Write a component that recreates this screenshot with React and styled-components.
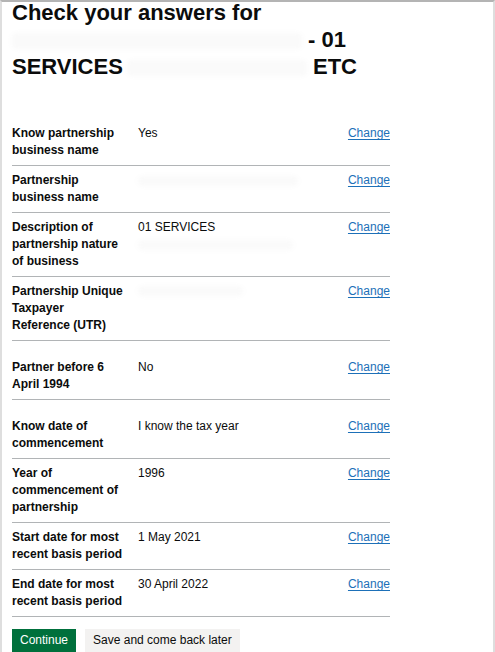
import React from 'react';
import styled, { createGlobalStyle } from 'styled-components';

const GlobalStyle = createGlobalStyle`
  body {
    margin: 0;
    font-family: "Liberation Sans", Arial, sans-serif;
    color: #0b0c0c;
    background: #fff;
  }
`

const Frame = styled.div`
  box-sizing: border-box;
  min-height: 652px;
  border-top: 2px solid #b4b4b4;
  border-left: 2px solid #dedede;
  border-right: 2px solid #dedede;
  padding: 0 10px;
  overflow: hidden;
`

const Heading = styled.h1`
  margin: -3px 0 0;
  font-size: 22px;
  line-height: 27px;
  font-weight: 700;
`

const HeadLine = styled.span`
  display: block;
  white-space: nowrap;
`

// blurred-out personal data in the screenshot
const Redacted = styled.span`
  display: inline-block;
  vertical-align: middle;
  width: ${p => p.$w}px;
  height: ${p => p.$h || 10}px;
  margin-left: ${p => p.$ml || 0}px;
  margin-top: ${p => p.$mt || 0}px;
  background: #fafafa;
  border-radius: 4px;
  filter: blur(2px);
`

const SummaryList = styled.dl`
  margin: 39px 0 0;
  width: 378px;
`

const Row = styled.div`
  display: grid;
  grid-template-columns: 126px 1fr auto;
  padding: ${p => (p.$spaced ? '18px' : '6px')} 0 6px;
  border-bottom: 1px solid #b1b4b6;
  font-size: 12px;
  line-height: 17px;
`

const Key = styled.dt`
  margin: 0;
  font-weight: 700;
`

const Value = styled.dd`
  margin: 0;
  display: flex;
  flex-direction: column;
  align-items: flex-start;
`

const Actions = styled.dd`
  margin: 0;
  text-align: right;
`

const ChangeLink = styled.a`
  color: #1d70b8;
  text-decoration: underline;
  text-underline-offset: 2px;
  cursor: pointer;
`

const ButtonGroup = styled.div`
  display: flex;
  gap: 9px;
  margin-top: 12px;
`

const Button = styled.button`
  font-family: inherit;
  font-size: 12px;
  line-height: 17px;
  padding: 3px 8px 6px;
  border: 0;
  border-radius: 0;
  color: ${p => (p.$secondary ? '#0b0c0c' : '#fff')};
  background: ${p => (p.$secondary ? '#f3f2f1' : '#00703c')};
  box-shadow: 0 2px 0 ${p => (p.$secondary ? '#929191' : '#002d18')};
  cursor: pointer;
`

const rows = [
  { key: ['Know partnership', 'business name'], value: 'Yes' },
  { key: ['Partnership', 'business name'], smudge: { w: 160, mt: 4 } },
  { key: ['Description of', 'partnership nature', 'of business'], value: '01 SERVICES', smudge: { w: 155, mt: 4 } },
  { key: ['Partnership Unique', 'Taxpayer', 'Reference (UTR)'], smudge: { w: 105, mt: 3 } },
  { key: ['Partner before 6', 'April 1994'], value: 'No', spaced: true },
  { key: ['Know date of', 'commencement'], value: 'I know the tax year', spaced: true },
  { key: ['Year of', 'commencement of', 'partnership'], value: '1996' },
  { key: ['Start date for most', 'recent basis period'], value: '1 May 2021' },
  { key: ['End date for most', 'recent basis period'], value: '30 April 2022' },
]

export default function App() {
  return (
    <>
      <GlobalStyle />
      <Frame>
        <Heading>
          <HeadLine>Check your answers for</HeadLine>
          <HeadLine>
            <Redacted $w={290} $h={16} /> - 01
          </HeadLine>
          <HeadLine>
            SERVICES<Redacted $w={180} $h={16} $ml={4} /> ETC
          </HeadLine>
        </Heading>

        <SummaryList>
          {rows.map((row, i) => (
            <Row key={i} $spaced={row.spaced}>
              <Key>
                {row.key.map((line, j) => (
                  <React.Fragment key={j}>
                    {j > 0 && <br />}
                    {line}
                  </React.Fragment>
                ))}
              </Key>
              <Value>
                {row.value && <span>{row.value}</span>}
                {row.smudge && <Redacted $w={row.smudge.w} $mt={row.smudge.mt} />}
              </Value>
              <Actions>
                <ChangeLink href="#">Change</ChangeLink>
              </Actions>
            </Row>
          ))}
        </SummaryList>

        <ButtonGroup>
          <Button type="button">Continue</Button>
          <Button type="button" $secondary>Save and come back later</Button>
        </ButtonGroup>
      </Frame>
    </>
  )
}
